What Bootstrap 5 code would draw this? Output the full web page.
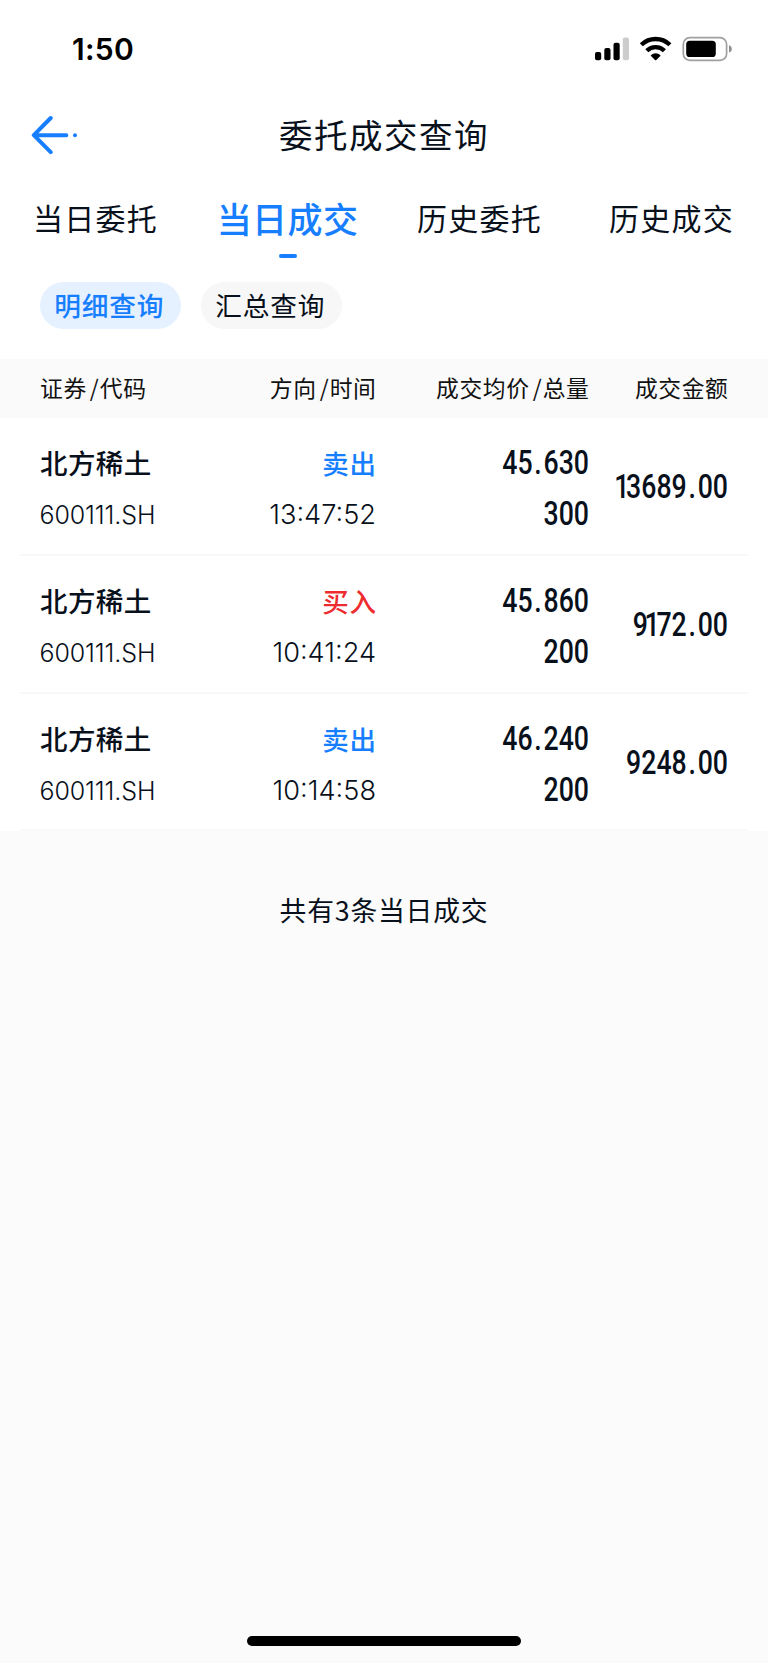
<!DOCTYPE html>
<html lang="zh-CN">
<head>
<meta charset="utf-8">
<meta name="viewport" content="width=device-width, initial-scale=1">
<title>委托成交查询</title>
<link href="https://cdn.jsdelivr.net/npm/bootstrap@5.3.0/dist/css/bootstrap.min.css" rel="stylesheet">
<style>
body{font-family:"Noto Sans CJK SC",sans-serif;color:#08101b;background:#fbfbfb;min-height:1663px}
.status-bar{height:98px;padding:0 36px 0 72px}
.clock{font:600 30px/98px Inter,sans-serif;letter-spacing:.3px;color:#000}
.title-bar{height:72px;display:grid;grid-template-columns:80px 1fr 80px}
.title-bar h1{font-size:33.5px;font-weight:400;letter-spacing:1.5px;line-height:72px}
.back-btn{padding:17px 0 0 31px}
.tab-item{height:96px;font-size:30px;line-height:95px;letter-spacing:1.2px;padding-right:1px;white-space:nowrap;color:inherit;text-decoration:none}
.tab-item.active{font-size:35px;font-weight:500;letter-spacing:.4px;color:#177fff}
.tab-item.active::after{content:"";position:absolute;left:50%;top:84px;width:18px;height:4px;margin-left:-9px;border-radius:2px;background:#177fff}
.filters{height:93px;padding:16px 40px 0 39.5px;gap:19.5px}
.pill{width:141.5px;height:47px;border-radius:24px;background:#f7f7f7;font-size:26.7px;line-height:46px;letter-spacing:.8px;padding-right:2px;text-align:center}
.pill.active{background:#e6f1ff;color:#177fff;font-weight:500}
.cols{display:grid;grid-template-columns:160px 176px 213px 139px;padding:0 20px}
.head{height:59px;background:#fafafa;padding:0 40px;font-size:22.8px;line-height:57px;letter-spacing:.6px;color:#111}
.head .text-end{margin-right:-.5px}
.slash{margin:0 .5px 0 3px}
.trade{height:137.8px;margin:0 20px;border-bottom:2px solid #f8f8f8;padding-top:26px}
.l1,.l2{height:38px;line-height:38px;white-space:nowrap}
.l2{margin-top:13px}
.stock{font-size:27.5px;font-weight:500;letter-spacing:.4px;line-height:36px}
.side{font-size:26.5px;font-weight:500;letter-spacing:.9px;margin-right:-1px}
.sell{color:#177fff}.buy{color:#ee2c2f}
.code,.time{font-family:Inter,sans-serif;font-weight:300;line-height:40px}
.code{font-size:25px;letter-spacing:-.1px;margin-left:-.5px}
.time{font-size:27.2px}
.num{font-family:Roboto,sans-serif;font-weight:500;font-size:32.5px;transform:scaleX(.82);transform-origin:right center}
.num i{font-style:normal;margin:0 2.2px}
.num b{font-weight:inherit;letter-spacing:-4px}
.amount{line-height:86px;height:86px}
.total{margin-top:60px;font-size:26.8px;line-height:38px;letter-spacing:.8px}
.home-bar{width:274px;height:10px;border-radius:5px;background:#000;margin-bottom:17px}
</style>
</head>
<body class="d-flex flex-column">
<header class="bg-white">
  <div class="status-bar d-flex justify-content-between align-items-center">
    <span class="clock">1:50</span>
    <svg width="138" height="26" viewBox="594 36 138 26" aria-hidden="true">
      <rect x="595" y="52" width="6.2" height="8.3" rx="2"/>
      <rect x="604.3" y="48" width="6.2" height="12.3" rx="2"/>
      <rect x="613.5" y="42.7" width="6.2" height="17.6" rx="2"/>
      <rect x="622.8" y="37.5" width="6.2" height="22.8" rx="2" fill="#ccc"/>
      <g fill="none" stroke="#000" stroke-width="4.3">
        <path d="M641.3 44.8a20.5 20.5 0 0 1 28.6 0"/>
        <path d="M646.8 50.7a12.4 12.4 0 0 1 17.6 0"/>
      </g>
      <path d="M650.9 55.2a7 7 0 0 1 9.5 0q.3.5-.1.9l-4 3.8q-.7.6-1.3 0l-4-3.8q-.5-.4-.1-.9z"/>
      <rect x="683.3" y="37.7" width="43.3" height="22.6" rx="6.5" fill="none" stroke="#a0a0a0" stroke-width="1.7"/>
      <rect x="686.2" y="40.7" width="29.6" height="16.3" rx="3.6"/>
      <path d="M729 45.2q2.8.9 2.8 3.8T729 52.6z" fill="#8e8e8e"/>
    </svg>
  </div>
  <div class="title-bar">
    <a href="#" class="back-btn" aria-label="返回">
      <svg class="d-block" width="48" height="40" viewBox="31 115 48 40"><path d="M50.7 118 33.8 135.2 50.7 152.2M34 135.2H66.3" fill="none" stroke="#177fff" stroke-width="4" stroke-linecap="round" stroke-linejoin="round"/><circle cx="75" cy="135.3" r="2" fill="#177fff"/></svg>
    </a>
    <h1 class="m-0 text-center">委托成交查询</h1>
  </div>
  <nav class="row g-0 text-center">
    <a href="#" class="tab-item col-3">当日委托</a>
    <a href="#" class="tab-item col-3 active position-relative">当日成交</a>
    <a href="#" class="tab-item col-3">历史委托</a>
    <a href="#" class="tab-item col-3">历史成交</a>
  </nav>
  <div class="filters d-flex">
    <div class="pill active">明细查询</div>
    <div class="pill">汇总查询</div>
  </div>
</header>
<main class="flex-grow-1">
  <div class="cols head">
    <div>证券<span class="slash">/</span>代码</div>
    <div class="text-end">方向<span class="slash">/</span>时间</div>
    <div class="text-end">成交均价<span class="slash">/</span>总量</div>
    <div class="text-end">成交金额</div>
  </div>
  <div class="bg-white overflow-hidden">
    <div class="cols trade">
      <div><div class="l1 stock">北方稀土</div><div class="l2 code">600111.SH</div></div>
      <div class="text-end"><div class="l1 side sell">卖出</div><div class="l2 time">13:47:52</div></div>
      <div class="text-end"><div class="l1 num">45<i>.</i>630</div><div class="l2 num">300</div></div>
      <div class="text-end num amount"><b>1</b>3689<i>.</i>00</div>
    </div>
    <div class="cols trade">
      <div><div class="l1 stock">北方稀土</div><div class="l2 code">600111.SH</div></div>
      <div class="text-end"><div class="l1 side buy">买入</div><div class="l2 time">10:41:24</div></div>
      <div class="text-end"><div class="l1 num">45<i>.</i>860</div><div class="l2 num">200</div></div>
      <div class="text-end num amount"><b>91</b>72<i>.</i>00</div>
    </div>
    <div class="cols trade">
      <div><div class="l1 stock">北方稀土</div><div class="l2 code">600111.SH</div></div>
      <div class="text-end"><div class="l1 side sell">卖出</div><div class="l2 time">10:14:58</div></div>
      <div class="text-end"><div class="l1 num">46<i>.</i>240</div><div class="l2 num">200</div></div>
      <div class="text-end num amount">9248<i>.</i>00</div>
    </div>
  </div>
  <p class="total text-center mb-0">共有3条当日成交</p>
</main>
<div class="home-bar mx-auto"></div>
<script src="https://cdn.jsdelivr.net/npm/bootstrap@5.3.0/dist/js/bootstrap.bundle.min.js"></script>
</body>
</html>
